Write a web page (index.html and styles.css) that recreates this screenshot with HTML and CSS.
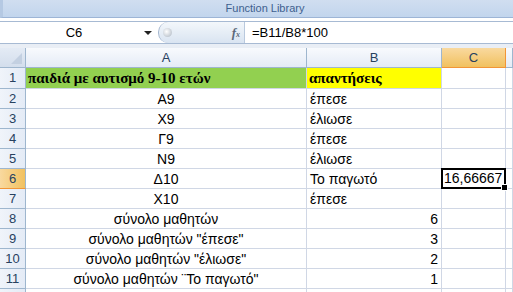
FILE: index.html
```html
<!DOCTYPE html>
<html lang="el">
<head>
<meta charset="UTF-8">
<title>Book1 - Excel</title>
<link rel="stylesheet" href="styles.css">
</head>
<body>

<div class="ribbon">
    <div class="group-label">Function Library</div>
</div>

<div class="formula-bar">
    <div class="name-box">
        <span class="cell-ref">C6</span>
        <span class="arrow"></span>
    </div>
    <div class="splitter">
        <span class="knob"></span>
        <span class="fx">f<sub>x</sub></span>
    </div>
    <div class="formula">=B11/B8*100</div>
</div>

<div class="gap"></div>

<div class="sheet">
    <div class="corner"><span class="tri"></span></div>
    <div class="col-head">A</div>
    <div class="col-head">B</div>
    <div class="col-head active">C</div>
    <div class="col-head"></div>

    <div class="row-head first">1</div>
    <div class="cell first title green">παιδιά με αυτισμό 9-10 ετών</div>
    <div class="cell first title yellow">απαντήσεις</div>
    <div class="cell first"></div>
    <div class="cell first"></div>

    <div class="row-head">2</div>
    <div class="cell center">Α9</div>
    <div class="cell">έπεσε</div>
    <div class="cell"></div>
    <div class="cell"></div>

    <div class="row-head">3</div>
    <div class="cell center">Χ9</div>
    <div class="cell">έλιωσε</div>
    <div class="cell"></div>
    <div class="cell"></div>

    <div class="row-head">4</div>
    <div class="cell center">Γ9</div>
    <div class="cell">έπεσε</div>
    <div class="cell"></div>
    <div class="cell"></div>

    <div class="row-head">5</div>
    <div class="cell center">Ν9</div>
    <div class="cell">έλιωσε</div>
    <div class="cell"></div>
    <div class="cell"></div>

    <div class="row-head active">6</div>
    <div class="cell center">Δ10</div>
    <div class="cell">Το παγωτό</div>
    <div class="cell right selected">16,66667<span class="handle"></span></div>
    <div class="cell"></div>

    <div class="row-head">7</div>
    <div class="cell center">Χ10</div>
    <div class="cell">έπεσε</div>
    <div class="cell"></div>
    <div class="cell"></div>

    <div class="row-head">8</div>
    <div class="cell center">σύνολο μαθητών</div>
    <div class="cell right">6</div>
    <div class="cell"></div>
    <div class="cell"></div>

    <div class="row-head">9</div>
    <div class="cell center">σύνολο μαθητών "έπεσε"</div>
    <div class="cell right">3</div>
    <div class="cell"></div>
    <div class="cell"></div>

    <div class="row-head">10</div>
    <div class="cell center">σύνολο μαθητών "έλιωσε"</div>
    <div class="cell right">2</div>
    <div class="cell"></div>
    <div class="cell"></div>

    <div class="row-head">11</div>
    <div class="cell center">σύνολο μαθητών ¨Το παγωτό"</div>
    <div class="cell right">1</div>
    <div class="cell"></div>
    <div class="cell"></div>

    <div class="row-head"></div>
    <div class="cell"></div>
    <div class="cell"></div>
    <div class="cell"></div>
    <div class="cell"></div>
</div>

</body>
</html>
```

FILE: styles.css
```css
body {
    margin: 0;
    padding: 0;
    width: 513px;
    height: 292px;
    overflow: hidden;
    background-color: #fff;
    font-family: "Liberation Sans", Arial, sans-serif;
}
.ribbon {
    height: 17px;
    background: linear-gradient(#d0def0, #c2d5ed);
    border-left: 3px solid #b5c9e3;
    border-bottom: 1px solid #9db5d6;
}
.group-label {
    text-align: center;
    font-size: 11px;
    line-height: 16px;
    color: #3e5f8e;
    padding-left: 14px;
}
.formula-bar {
    display: flex;
    height: 21px;
    margin-top: 3px;
    border-top: 1px solid #a7bad3;
    border-bottom: 1px solid #a7bad3;
    background-color: #fff;
}
.name-box {
    width: 158px;
    display: flex;
    align-items: center;
    position: relative;
}
.cell-ref {
    flex: 1;
    text-align: center;
    font-size: 13px;
    color: #000;
    padding-left: 4px;
}
.arrow {
    width: 0;
    height: 0;
    margin-right: 6px;
    border-left: 4px solid transparent;
    border-right: 4px solid transparent;
    border-top: 4px solid #222;
}
.splitter {
    width: 85px;
    display: flex;
    align-items: center;
    justify-content: space-between;
    background: linear-gradient(#f3f7fb, #d9e4f1);
    border-radius: 10px 0 0 10px;
    border-left: 1px solid #a4b6cf;
    border-right: 1px solid #b9c9dd;
}
.knob {
    width: 9px;
    height: 9px;
    margin-left: 4px;
    border-radius: 50%;
    background: radial-gradient(circle at 40% 40%, #fff, #a9b3bf);
}
.fx {
    font-family: "Liberation Serif", serif;
    font-style: italic;
    font-weight: bold;
    font-size: 13px;
    color: #5c6a7a;
    margin-right: 4px;
}
.fx sub {
    font-size: 8px;
    vertical-align: 0;
}
.formula {
    padding-left: 7px;
    font-size: 13px;
    line-height: 21px;
    color: #000;
}
.gap {
    height: 4px;
    background-color: #e9eef5;
}
.sheet {
    display: grid;
    grid-template-columns: 26px 281px 135px 64px 1fr;
    grid-template-rows: 20px 21px repeat(11, 20px);
}
.corner {
    background: linear-gradient(#e4ebf5, #d3deec);
    border-right: 1px solid #9eb6ce;
    border-bottom: 1px solid #9eb6ce;
    position: relative;
}
.tri {
    position: absolute;
    right: 3px;
    bottom: 3px;
    width: 0;
    height: 0;
    border-left: 11px solid transparent;
    border-bottom: 11px solid #c3d0e1;
}
.col-head {
    background: linear-gradient(#f8fafd, #e4ebf6);
    border-right: 1px solid #9eb6ce;
    border-bottom: 1px solid #9eb6ce;
    text-align: center;
    font-size: 13px;
    line-height: 20px;
    color: #27415f;
}
.col-head.active {
    background: linear-gradient(#f9d99f, #f1c15f);
    border-right-color: #f29536;
    border-bottom-color: #f29536;
}
.row-head {
    background: linear-gradient(90deg, #f0f4fa, #e4ebf6);
    border-right: 1px solid #9eb6ce;
    border-bottom: 1px solid #9eb6ce;
    text-align: center;
    font-size: 13px;
    line-height: 20px;
    color: #27415f;
}
.row-head.active {
    background: linear-gradient(90deg, #f9d99f, #f1c15f);
    border-bottom-color: #f29536;
}
.cell {
    border-right: 1px solid #d0d7e5;
    border-bottom: 1px solid #d0d7e5;
    font-size: 14px;
    line-height: 20px;
    padding: 0 3px;
    white-space: nowrap;
    color: #000;
}
.cell.first {
    line-height: 21px;
}
.title {
    font-family: "Liberation Serif", serif;
    font-weight: bold;
    font-size: 15px;
    padding-left: 2px;
}
.green {
    background-color: #92d050;
}
.yellow {
    background-color: #ffff00;
}
.center {
    text-align: center;
}
.right {
    text-align: right;
}
.selected {
    position: relative;
    outline: 2px solid #000;
    outline-offset: -2px;
    margin: -1px 0 0 -1px;
    padding-right: 4px;
}
.handle {
    position: absolute;
    right: -3px;
    bottom: -3px;
    width: 5px;
    height: 5px;
    background-color: #000;
    border: 1px solid #fff;
}
```
